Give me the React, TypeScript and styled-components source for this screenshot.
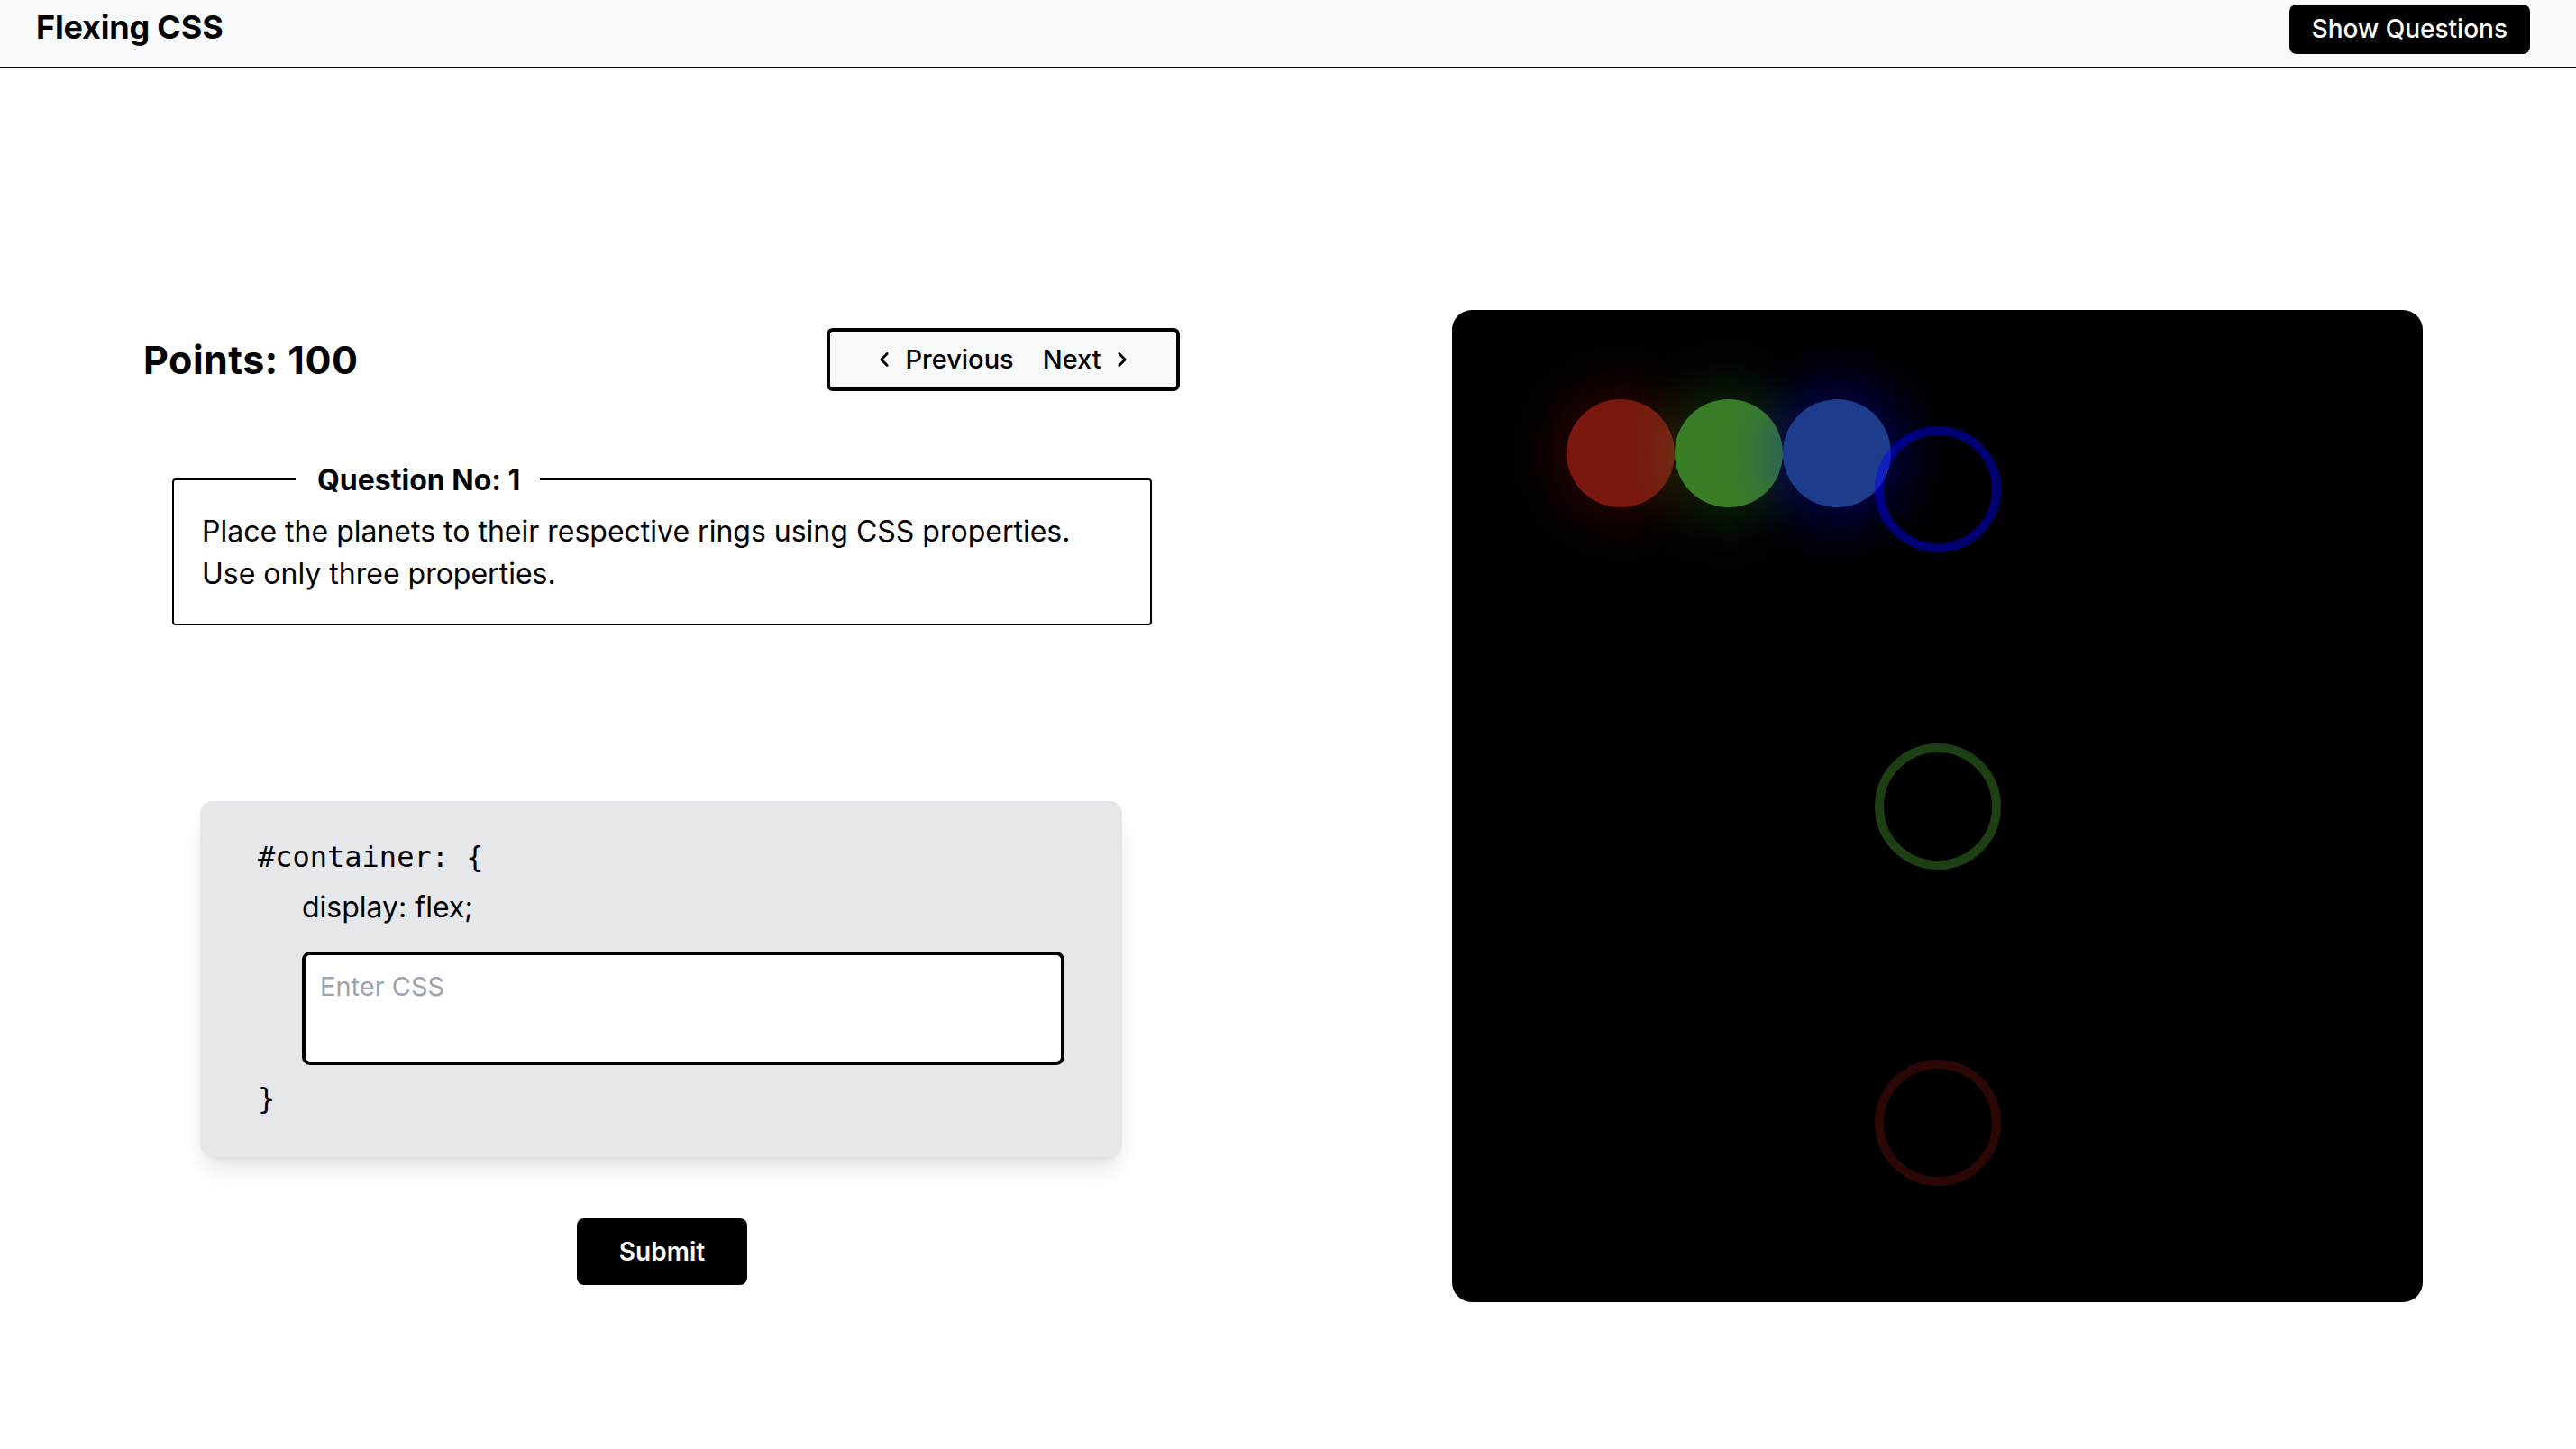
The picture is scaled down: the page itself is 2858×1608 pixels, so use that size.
import React from "react";
import styled, { createGlobalStyle } from "styled-components";
import { ChevronLeft, ChevronRight } from "lucide-react";

const GlobalStyle = createGlobalStyle`
  html, body {
    margin: 0;
    padding: 0;
    background: #ffffff;
  }
  body {
    font-family: Inter, "Noto Sans", "Liberation Sans", sans-serif;
    color: #000000;
  }
  * { box-sizing: border-box; }
`;

const Page = styled.div`
  min-height: 100vh;
  display: flex;
  flex-direction: column;
`;

const Header = styled.header`
  height: 76px;
  background: #f9fafb;
  border-bottom: 2px solid #000000;
  display: flex;
  align-items: center;
  justify-content: space-between;
  padding: 0 51px 14px 40px;
`;

const Brand = styled.h1`
  margin: 0;
  font-size: 36px;
  font-weight: 700;
  line-height: 44px;
  letter-spacing: -0.2px;
`;

const DarkButton = styled.button`
  background: #000000;
  color: #ffffff;
  border: none;
  border-radius: 8px;
  font-family: Inter, "Liberation Sans", sans-serif;
  cursor: pointer;
  display: inline-flex;
  align-items: center;
  justify-content: center;
`;

const ShowButton = styled(DarkButton)`
  height: 55px;
  margin-top: 4px;
  padding: 0 25px;
  font-size: 28px;
  font-weight: 500;
`;

const Main = styled.main`
  display: flex;
  align-items: center;
  padding: 268px 0 0 159px;
  gap: 302px;
`;

const LeftColumn = styled.section`
  width: 1150px;
  display: flex;
  flex-direction: column;
`;

const TopRow = styled.div`
  height: 70px;
  display: flex;
  align-items: center;
  justify-content: space-between;
`;

const Points = styled.h2`
  margin: 0;
  font-size: 43px;
  font-weight: 700;
  letter-spacing: 0.5px;
  line-height: 52px;
`;

const NavBox = styled.div`
  width: 392px;
  height: 70px;
  border: 4px solid #000000;
  border-radius: 7px;
  background: #f8f9fa;
  display: flex;
  align-items: center;
  justify-content: center;
  gap: 32px;
`;

const NavButton = styled.button`
  background: transparent;
  border: none;
  padding: 0;
  display: inline-flex;
  align-items: center;
  gap: 10px;
  font-family: Inter, "Liberation Sans", sans-serif;
  font-size: 29px;
  font-weight: 500;
  color: #000000;
  cursor: pointer;
`;

const Question = styled.fieldset`
  margin: 76px 31px 0 32px;
  border: 2px solid #000000;
  border-radius: 4px;
  padding: 11px 31px 32px;
  min-width: 0;
`;

const Legend = styled.legend`
  margin-left: 104px;
  padding: 0 22px 0 24px;
  font-size: 32px;
  font-weight: 700;
  line-height: 45px;
`;

const QuestionText = styled.p`
  margin: 0;
  font-size: 32px;
  line-height: 47px;
  font-weight: 400;
`;

const CodeBox = styled.div`
  margin: 195px 64px 0 63px;
  background: #e5e7eb;
  border-radius: 14px;
  padding: 38px 64px 41px 64px;
  box-shadow: 0 18px 27px -5px rgba(0, 0, 0, 0.1),
    0 7px 11px -7px rgba(0, 0, 0, 0.1);
  display: flex;
  flex-direction: column;
`;

const CodeLine = styled.div<{ $mt?: number }>`
  font-family: "DejaVu Sans Mono", "Liberation Mono", monospace;
  font-size: 32px;
  line-height: 48px;
  margin-top: ${(p) => p.$mt ?? 0}px;
`;

const PropLine = styled.div`
  margin: 10px 0 0 49px;
  font-size: 32px;
  line-height: 44px;
`;

const CssInput = styled.textarea`
  margin: 27px 0 0 49px;
  width: 846px;
  height: 126px;
  border: 4px solid #000000;
  border-radius: 9px;
  background: #ffffff;
  padding: 13px 16px;
  font-family: Inter, "Liberation Sans", sans-serif;
  font-size: 29px;
  line-height: 43px;
  resize: none;
  outline: none;
  &::placeholder {
    color: #9ca3af;
  }
`;

const SubmitRow = styled.div`
  margin-top: 68px;
  display: flex;
  justify-content: center;
  padding-left: 1px;
`;

const SubmitButton = styled(DarkButton)`
  width: 189px;
  height: 74px;
  font-size: 28px;
  font-weight: 600;
`;

const Board = styled.section`
  position: relative;
  width: 1077px;
  height: 1101px;
  background: #000000;
  border-radius: 22px;
  overflow: hidden;
`;

const RingLayer = styled.div`
  position: absolute;
  inset: 0;
  display: flex;
  flex-direction: column;
  align-items: center;
  justify-content: space-between;
  padding: 129px 0;
  z-index: 2;
`;

const Ring = styled.div<{ $color: string }>`
  width: 140px;
  height: 140px;
  border-radius: 50%;
  border: 10px solid ${(p) => p.$color};
`;

const PlanetLayer = styled.div`
  position: absolute;
  inset: 0;
  display: flex;
  align-items: flex-start;
  padding: 99px 0 0 127px;
  z-index: 1;
`;

const Planet = styled.div<{ $color: string; $glow: string }>`
  width: 120px;
  height: 120px;
  border-radius: 50%;
  background: ${(p) => p.$color};
  box-shadow: 0 0 60px 16px ${(p) => p.$glow};
`;

const planets = [
  { color: "#7a1710", glow: "rgba(200, 25, 10, 0.2)" },
  { color: "#3a7d27", glow: "rgba(60, 170, 40, 0.22)" },
  { color: "#1e3c8c", glow: "rgba(0, 0, 255, 0.32)" },
];

const rings = [
  "rgba(0, 0, 255, 0.45)",
  "rgba(57, 125, 40, 0.5)",
  "rgba(122, 22, 16, 0.35)",
];

export default function App() {
  return (
    <Page>
      <GlobalStyle />
      <Header>
        <Brand>Flexing CSS</Brand>
        <ShowButton>Show Questions</ShowButton>
      </Header>
      <Main>
        <LeftColumn>
          <TopRow>
            <Points>Points: 100</Points>
            <NavBox>
              <NavButton>
                <ChevronLeft size={26} strokeWidth={2.5} />
                Previous
              </NavButton>
              <NavButton>
                Next
                <ChevronRight size={26} strokeWidth={2.5} />
              </NavButton>
            </NavBox>
          </TopRow>
          <Question>
            <Legend>Question No: 1</Legend>
            <QuestionText>
              Place the planets to their respective rings using CSS properties.
              <br />
              Use only three properties.
            </QuestionText>
          </Question>
          <CodeBox>
            <CodeLine>#container: {"{"}</CodeLine>
            <PropLine>display: flex;</PropLine>
            <CssInput placeholder="Enter CSS" />
            <CodeLine $mt={13}>{"}"}</CodeLine>
          </CodeBox>
          <SubmitRow>
            <SubmitButton>Submit</SubmitButton>
          </SubmitRow>
        </LeftColumn>
        <Board>
          <PlanetLayer>
            {planets.map((p, i) => (
              <Planet key={i} $color={p.color} $glow={p.glow} />
            ))}
          </PlanetLayer>
          <RingLayer>
            {rings.map((c, i) => (
              <Ring key={i} $color={c} />
            ))}
          </RingLayer>
        </Board>
      </Main>
    </Page>
  );
}
